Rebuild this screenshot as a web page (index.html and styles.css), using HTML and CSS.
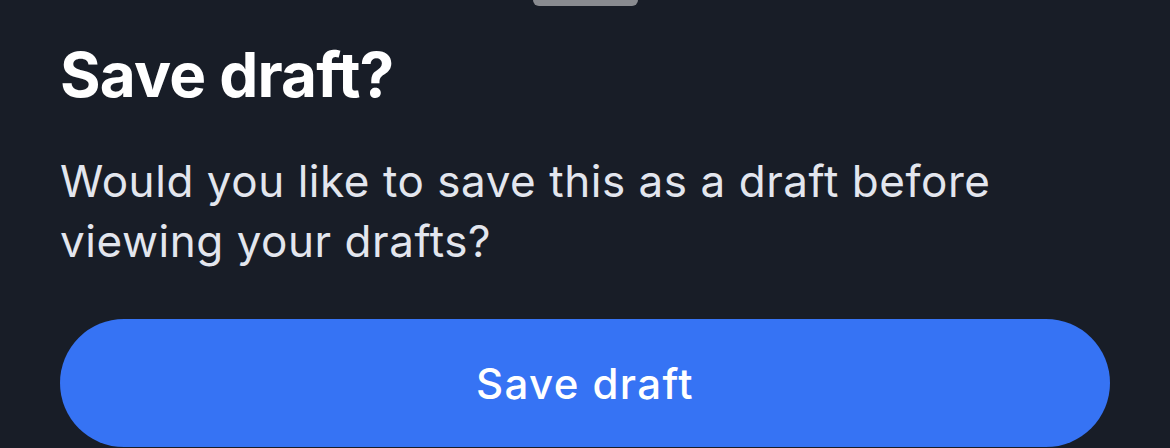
FILE: index.html
```html
<!DOCTYPE html>
<html lang="en">
<head>
  <meta charset="UTF-8" />
  <meta name="viewport" content="width=device-width, initial-scale=1.0" />
  <title>Save draft?</title>
  <link rel="stylesheet" href="styles.css">
</head>
<body>
  <div class="sheet">
    <div class="handle"></div>
    <div class="sheet-body">
      <h1 class="sheet-title">Save draft?</h1>
      <p class="sheet-text">Would you like to save this as a draft before viewing your drafts?</p>
      <button class="btn-primary" type="button">Save draft</button>
    </div>
  </div>
</body>
</html>
```

FILE: styles.css
```css
html, body {
  margin: 0;
  padding: 0;
  height: 100%;
  overflow: hidden;
}
body {
  font-family: Inter, 'Noto Sans', sans-serif;
  background-color: #181d27;
  color: #e3e6ee;
}
.sheet {
  display: flex;
  flex-direction: column;
  align-items: center;
}
.handle {
  width: 105px;
  height: 6px;
  background-color: #898b90;
  border-radius: 0 0 7px 7px;
}
.sheet-body {
  align-self: stretch;
  display: flex;
  flex-direction: column;
  padding: 32px 60px 0 60px;
}
.sheet-title {
  margin: 0;
  font-size: 62px;
  line-height: 74px;
  font-weight: 700;
  letter-spacing: -0.8px;
  color: #ffffff;
}
.sheet-text {
  margin: 39px 0 0 0;
  font-size: 44px;
  line-height: 60px;
  font-weight: 400;
  letter-spacing: 0.55px;
  color: #e3e6ee;
  max-width: 1000px;
}
.btn-primary {
  margin-top: 48px;
  height: 128px;
  border: none;
  border-radius: 64px;
  background-color: #3673f4;
  color: #ffffff;
  font-family: inherit;
  font-size: 42px;
  font-weight: 500;
  letter-spacing: 1.4px;
  padding: 0;
}
```
